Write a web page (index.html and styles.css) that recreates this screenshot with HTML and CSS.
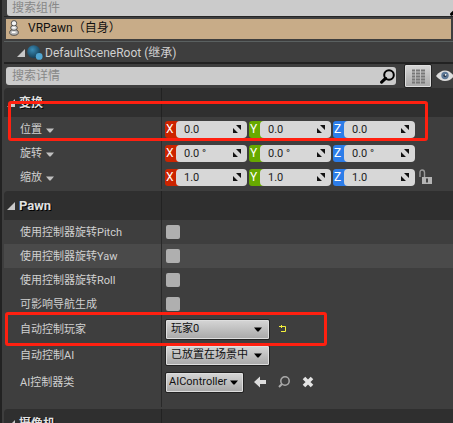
FILE: index.html
```html
<!DOCTYPE html>
<html lang="zh-CN">
<head>
<meta charset="utf-8">
<title>VRPawn</title>
<link rel="stylesheet" href="styles.css">
</head>
<body>
<svg hidden>
  <symbol id="tri" viewBox="0 0 8 8"><path d="M8 0V8H0Z" fill="#c8c8c8"/></symbol>
  <symbol id="caret" viewBox="0 0 8 5"><path d="M0 0.5H8L4.6 4.5H3.4Z" fill="currentColor"/></symbol>
  <symbol id="spin" viewBox="0 0 8 8"><path d="M3 0H8V5ZM0 3V8H5Z" fill="#111"/></symbol>
  <symbol id="mag" viewBox="0 0 15 15"><circle cx="9" cy="6" r="4.8" fill="none" stroke="currentColor" stroke-width="2"/><path d="M5.6 9.4L1.6 13.2" stroke="currentColor" stroke-width="3" stroke-linecap="round"/></symbol>
</svg>
<main class="panel">
  <div class="search search-top">
    <input class="query" type="text" placeholder="搜索组件" aria-label="搜索组件">
    <svg class="top-mag" width="15" height="15"><use href="#mag"/></svg>
  </div>
  <div class="node selected">
    <svg width="10" height="16" viewBox="0 0 10 16">
      <g stroke="#333" stroke-width=".8"><ellipse cx="5" cy="12.4" rx="4.3" ry="2.9" fill="#bbb"/><ellipse cx="5" cy="7.8" rx="3.3" ry="2.5" fill="#ddd"/><circle cx="5" cy="3.3" r="2.7" fill="#f4f4f4"/></g>
      <path d="M3 12.2H6.5M3.5 7.5H6" stroke="#fff" stroke-width="1.4"/>
    </svg>
    <span>VRPawn（自身）</span>
  </div>
  <div class="node child">
    <svg width="8" height="8"><use href="#tri"/></svg>
    <svg class="sphere" width="16" height="15" viewBox="0 0 16 15">
      <defs><radialGradient id="ball" cx=".4" cy=".35" r=".65"><stop offset="0" stop-color="#3b8cb5"/><stop offset="1" stop-color="#153f58"/></radialGradient></defs>
      <circle cx="6.7" cy="6.7" r="6.5" fill="url(#ball)"/><circle cx="12.2" cy="11.4" r="3.4" fill="#4fa5d2"/>
    </svg>
    <span>DefaultSceneRoot (继承)</span>
  </div>
  <div class="search search-details">
    <div class="query-box">
      <input class="query" type="text" placeholder="搜索详情" aria-label="搜索详情">
      <svg class="box-mag" width="15" height="15"><use href="#mag"/></svg>
    </div>
    <button class="btn grid-btn" aria-label="属性矩阵">
      <svg width="13" height="15" viewBox="0 0 13 15" stroke="#777" stroke-width="2" fill="none"><path d="M0 1.5H13M0 4.5H13M0 7.5H13M0 10.5H13M0 13.5H13" stroke-dasharray="3 1 4 1 4 0"/></svg>
    </button>
    <button class="icon-btn" aria-label="视图选项">
      <svg width="18" height="12" viewBox="0 0 18 12"><path d="M0 6Q4 .5 9 .5T18 6Q14 11 9 11T0 6Z" fill="#ddd"/><circle cx="9" cy="5.5" r="3.7" fill="#5d7897"/><circle cx="9" cy="5.5" r="1.6" fill="#27374a"/><circle cx="9.6" cy="4.8" r=".9" fill="#fff"/></svg>
    </button>
  </div>

  <section class="group">
    <h2 class="head"><svg width="8" height="8"><use href="#tri"/></svg>变换</h2>
    <div class="row"><div class="label">位置 <svg width="8" height="5"><use href="#caret"/></svg></div>
      <div class="value vector">
        <label class="axis x">X<input value="0.0"><svg width="8" height="8"><use href="#spin"/></svg></label>
        <label class="axis y">Y<input value="0.0"><svg width="8" height="8"><use href="#spin"/></svg></label>
        <label class="axis z">Z<input value="0.0"><svg width="8" height="8"><use href="#spin"/></svg></label>
      </div></div>
    <div class="row"><div class="label">旋转 <svg width="8" height="5"><use href="#caret"/></svg></div>
      <div class="value vector">
        <label class="axis x">X<input value="0.0 °"><svg width="8" height="8"><use href="#spin"/></svg></label>
        <label class="axis y">Y<input value="0.0 °"><svg width="8" height="8"><use href="#spin"/></svg></label>
        <label class="axis z">Z<input value="0.0 °"><svg width="8" height="8"><use href="#spin"/></svg></label>
      </div></div>
    <div class="row"><div class="label">缩放 <svg width="8" height="5"><use href="#caret"/></svg></div>
      <div class="value vector">
        <label class="axis x">X<input value="1.0"><svg width="8" height="8"><use href="#spin"/></svg></label>
        <label class="axis y">Y<input value="1.0"><svg width="8" height="8"><use href="#spin"/></svg></label>
        <label class="axis z">Z<input value="1.0"><svg width="8" height="8"><use href="#spin"/></svg></label>
        <button class="icon-btn lock" aria-label="锁定比例"><svg width="14" height="16" viewBox="0 0 14 16"><path d="M1 8V3.5Q1 1 3.2 1T5.5 3.5V8" fill="none" stroke="#999" stroke-width="1.4"/><path d="M3 8H13V15H3Z" fill="#b4b4b4"/><path d="M8 9.5V13.5" stroke="#444" stroke-width="2"/></svg></button>
      </div></div>
    <div class="highlight highlight-location"></div>
  </section>

  <section class="group">
    <h2 class="head latin"><svg width="8" height="8"><use href="#tri"/></svg>Pawn</h2>
    <div class="row"><label class="label" for="pitch">使用控制器旋转Pitch</label><div class="value"><input class="check" id="pitch" type="checkbox"></div></div>
    <div class="row hovered"><label class="label" for="yaw">使用控制器旋转Yaw</label><div class="value"><input class="check" id="yaw" type="checkbox"></div></div>
    <div class="row"><label class="label" for="roll">使用控制器旋转Roll</label><div class="value"><input class="check" id="roll" type="checkbox"></div></div>
    <div class="row"><label class="label" for="nav">可影响导航生成</label><div class="value"><input class="check" id="nav" type="checkbox"></div></div>
    <div class="row tall marked"><label class="label" for="player">自动控制玩家</label>
      <div class="value"><span class="combo"><select class="btn" id="player"><option>玩家0</option></select><svg width="8" height="5"><use href="#caret"/></svg></span>
        <button class="icon-btn" aria-label="重置为默认值"><svg width="8" height="8" viewBox="0 0 8 8"><path d="M0 1.5H6.5V6.5H2M2.5 0V3" fill="none" stroke="#f4f13c"/></svg></button></div>
      <div class="highlight highlight-player"></div></div>
    <div class="row tall"><label class="label" for="ai">自动控制AI</label>
      <div class="value"><span class="combo"><select class="btn" id="ai"><option>已放置在场景中</option></select><svg width="8" height="5"><use href="#caret"/></svg></span></div></div>
    <div class="row tall last"><label class="label" for="cls">AI控制器类</label>
      <div class="value"><span class="combo compact"><select class="btn" id="cls"><option>AIController</option></select><svg width="8" height="5"><use href="#caret"/></svg></span>
        <span class="tools">
          <button class="icon-btn" aria-label="使用所选"><svg width="12" height="12" viewBox="0 0 12 12"><path d="M0 6L6 .5V4H12V8H6V11.5Z" fill="#ddd"/></svg></button>
          <button class="icon-btn find" aria-label="浏览"><svg width="12" height="12" viewBox="0 0 12 12"><circle cx="7" cy="5" r="4.2" fill="none" stroke="currentColor" stroke-width="1.5"/><path d="M4 8L1 11" stroke="currentColor" stroke-width="2"/></svg></button>
          <button class="icon-btn" aria-label="清除"><svg width="12" height="12" viewBox="0 0 12 12"><path d="M2 2L10 10M10 2L2 10" stroke="#e4e4e4" stroke-width="3.6"/></svg></button>
        </span></div></div>
  </section>

  <section class="group">
    <h2 class="head"><svg width="8" height="8"><use href="#tri"/></svg>摄像机</h2>
  </section>
</main>
</body>
</html>
```
FILE: styles.css
```css
* { box-sizing: border-box; }
body {
  margin: 0;
  height: 100vh;
  overflow: hidden;
  background: #3e3e3e;
  border-left: 2px solid #222;
  color: #d0d0d0;
  font: 11px/16px Roboto, "Noto Sans CJK SC", sans-serif;
}
svg { display: block; flex: none; }
svg[hidden] { display: none; }
input, select, button { font: inherit; margin: 0; }
.panel { padding-left: 2px; }

.search { display: flex; align-items: center; color: #000; }
.search-top { height: 17px; padding-left: 3px; border-bottom: 1px solid #252525; position: relative; }
.query {
  width: 100%;
  height: 18px;
  padding: 0 6px;
  border: 0;
  border-radius: 3px;
  background: #cbcbcb;
  font-size: 12px;
}
.query::placeholder { color: #888; opacity: 1; }
.search-top .query { height: 16px; padding: 0 5px; border-radius: 0 0 0 3px; }
.top-mag { position: absolute; right: -12px; top: 1px; }
.search-details { height: 24px; margin-right: -1px; padding-left: 2px; gap: 4px; }
.query-box { position: relative; flex: 1; display: flex; }
.box-mag { position: absolute; right: 1px; top: 2px; }

.node { display: flex; align-items: center; font-size: 12px; white-space: nowrap; }
.selected {
  height: 20px;
  margin: 2px 2px 0;
  padding: 0 3px 2px;
  gap: 9px;
  background: #c8ac88;
  color: #111;
}
.child {
  height: 25px;
  padding: 4px 0 0 13px;
  gap: 2px;
  border-bottom: 2px solid #222;
  box-shadow: inset 0 2px #3e3e3e, inset 0 3px #5a6060;
}

.btn {
  border: 1px solid #222;
  border-radius: 2px;
  background: linear-gradient(#d6d6d6, #a8a8a8);
  box-shadow: inset 0 0 0 1px #dedede;
  color: #111;
}
.grid-btn { width: 28px; height: 24px; padding: 0; margin-left: 4px; display: grid; place-items: center; }
.icon-btn { padding: 0; border: 0; background: none; color: #aaa; display: block; }

.group { position: relative; margin-bottom: 2px; }
.head {
  display: flex;
  align-items: center;
  gap: 4px;
  height: 29px;
  margin: 0;
  padding-left: 3px;
  border-top-left-radius: 4px;
  background: linear-gradient(#222, #222) 157px 0 / 1px 100% no-repeat #2f2f2f;
  color: #e0e0e0;
  font-size: 12px;
  font-weight: 700;
  text-shadow: 1px 1px #000;
}
.latin { font-size: 13px; }
.row { position: relative; display: grid; grid-template-columns: 158px 1fr; height: 24px; }
.hovered { background: #4a4a4a; }
.label {
  display: flex;
  align-items: center;
  gap: 4px;
  padding: 2px 0 0 16px;
  border-right: 1px solid #292929;
  white-space: nowrap;
}
.label svg { color: #c0c0c0; }
.value { display: flex; align-items: center; gap: 9px; padding-left: 3px; }
.tall { height: 26px; }
.last { height: 39px; }
.last .label, .last .value { padding-bottom: 11px; }

.vector { gap: 2px; }
.axis {
  position: relative;
  display: flex;
  align-items: center;
  width: 82px;
  height: 17px;
  padding-left: 1px;
  border-radius: 3px;
  color: #fff;
  font-size: 12px;
}
.axis input {
  position: absolute;
  left: 11px;
  width: 71px;
  height: 17px;
  padding: 0 8px;
  border: 0;
  border-radius: 4px;
  background: #d7d7d7;
  color: #222;
  font-size: 11px;
}
.axis svg { position: absolute; right: 6px; }
.x { background: linear-gradient(90deg, #cc2400 16px, transparent 16px); }
.y { background: linear-gradient(90deg, #67a900 16px, transparent 16px); }
.z { background: linear-gradient(90deg, #2c7de9 16px, transparent 16px); }
.lock { margin-left: 2px; }

.check { appearance: none; width: 14px; height: 14px; margin-left: 1px; border-radius: 2px; background: #afafaf; }
.combo { position: relative; display: flex; align-items: center; color: #000; }
.combo .btn { appearance: none; width: 105px; height: 21px; padding: 0 5px; }
.combo svg { position: absolute; right: 8px; }
.compact .btn { width: 79px; padding: 0 3px; }
.compact svg { right: 6px; }
.tools { display: flex; gap: 12px; margin-left: 1px; }

.highlight { position: absolute; border: 3px solid #ff2010; border-radius: 3px; pointer-events: none; z-index: 1; }
.highlight-location { left: 4px; right: 25px; top: 13px; height: 40px; }
.highlight-player { left: 1px; width: 322px; top: -4px; bottom: -4px; }
```
